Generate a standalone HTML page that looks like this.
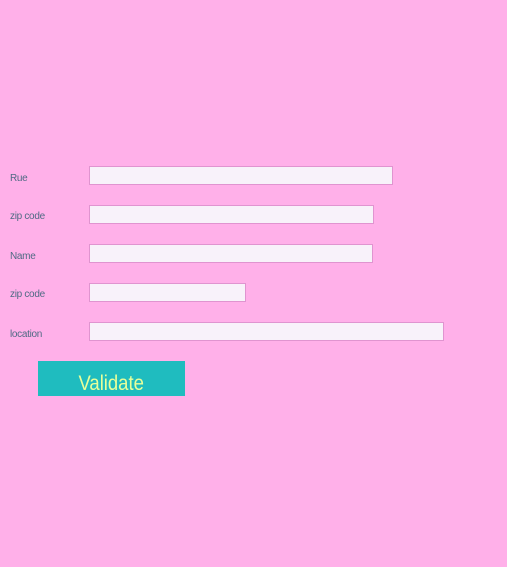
<!DOCTYPE html>
<html><head><meta charset="utf-8"><style>
html,body{margin:0;padding:0;}
body{width:507px;height:567px;background:#ffb0e9;position:relative;overflow:hidden;font-family:"Liberation Sans",sans-serif;}
.l{position:absolute;left:10px;font-size:10px;color:#4f6a84;letter-spacing:-0.3px;}
.i{position:absolute;left:89px;height:17px;background:#f8f2fa;border:1px solid #e094d0;box-sizing:content-box;}
.b{position:absolute;left:38px;top:361px;width:147px;height:35px;background:#1fbcbf;color:#e8ff9a;font-size:21px;text-align:center;line-height:45px;}
.b span{display:inline-block;transform:scaleX(0.88);}
</style></head><body>
<div class="l" style="top:173px">Rue</div><div class="i" style="top:166px;width:302px"></div>
<div class="l" style="top:211px">zip code</div><div class="i" style="top:205px;width:283px"></div>
<div class="l" style="top:251px">Name</div><div class="i" style="top:244px;width:282px"></div>
<div class="l" style="top:289px">zip code</div><div class="i" style="top:283px;width:155px"></div>
<div class="l" style="top:329px">location</div><div class="i" style="top:322px;width:353px"></div>
<div class="b"><span>Validate</span></div>
</body></html>
